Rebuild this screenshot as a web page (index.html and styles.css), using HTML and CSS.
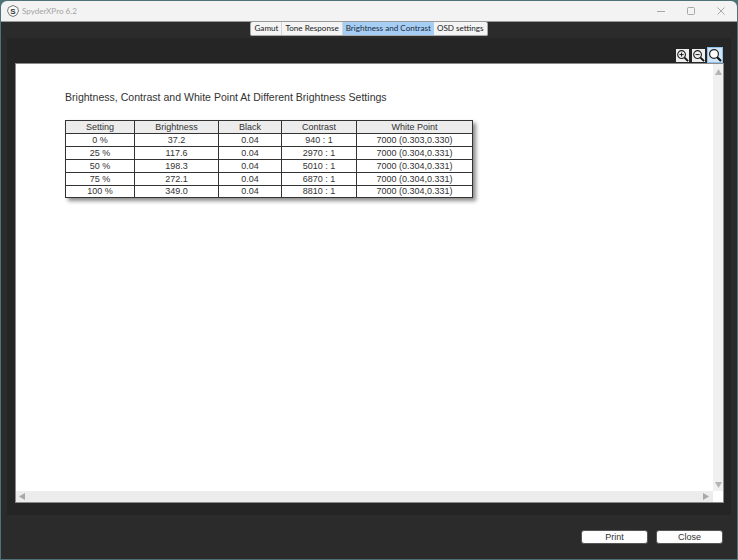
FILE: index.html
```html
<!DOCTYPE html>
<html lang="en">
<head>
<meta charset="utf-8">
<title>SpyderXPro 6.2</title>
<link rel="stylesheet" href="styles.css">
</head>
<body>
<div class="window">
  <header class="titlebar">
    <svg class="logo" width="14" height="14" viewBox="0 0 14 14"><path d="M7 1.5 L11.5 3.5 L12.5 7 L10.5 11 L7 12.5 L3.5 11 L1.5 7 L2.5 3.5 Z" fill="#fbfbfb" stroke="#777" stroke-width="1"/><text x="7" y="10" text-anchor="middle" class="logo-s">S</text></svg>
    <span class="title">SpyderXPro 6.2</span>
    <div class="controls">
      <svg width="8" height="8" viewBox="0 0 8 8"><path d="M0 4.5H8" stroke="#a8a8a8" fill="none"/></svg>
      <svg width="8" height="8" viewBox="0 0 8 8"><rect x="0.5" y="0.5" width="7" height="7" rx="1" stroke="#a8a8a8" fill="none"/></svg>
      <svg width="8" height="8" viewBox="0 0 8 8"><path d="M0.5 0.5L7.5 7.5M7.5 0.5L0.5 7.5" stroke="#a8a8a8" fill="none"/></svg>
    </div>
  </header>
  <main class="body">
    <nav class="tabs">
      <span class="tab">Gamut</span>
      <span class="tab">Tone Response</span>
      <span class="tab active">Brightness and Contrast</span>
      <span class="tab">OSD settings</span>
    </nav>
    <div class="panel">
      <div class="zoombar">
        <button class="zoom" aria-label="Zoom in"><svg width="13" height="13" viewBox="0 0 14 14"><circle cx="6" cy="6" r="4.2" fill="none" stroke="#222" stroke-width="1.2"/><path d="M9.2 9.2L13 13" stroke="#111" stroke-width="2"/><path d="M3.8 6H8.2M6 3.8V8.2" stroke="#111"/></svg></button>
        <button class="zoom" aria-label="Zoom out"><svg width="13" height="13" viewBox="0 0 14 14"><circle cx="6" cy="6" r="4.2" fill="none" stroke="#222" stroke-width="1.2"/><path d="M9.2 9.2L13 13" stroke="#111" stroke-width="2"/><path d="M3.8 6H8.2" stroke="#111"/></svg></button>
        <button class="zoom selected" aria-label="Fit"><svg width="14" height="14" viewBox="0 0 14 14"><circle cx="6" cy="6" r="4.4" fill="#fff" stroke="#222" stroke-width="1.2"/><path d="M9.2 9.2L13 13" stroke="#111" stroke-width="2"/></svg></button>
      </div>
      <section class="viewer">
        <div class="viewer-main">
          <div class="page">
            <h1 class="heading">Brightness, Contrast and White Point At Different Brightness Settings</h1>
            <table class="report">
              <colgroup><col class="c1"><col class="c2"><col class="c3"><col class="c4"><col class="c5"></colgroup>
              <thead><tr><th>Setting</th><th>Brightness</th><th>Black</th><th>Contrast</th><th>White Point</th></tr></thead>
              <tbody>
                <tr><td>0 %</td><td>37.2</td><td>0.04</td><td>940 : 1</td><td>7000 (0.303,0.330)</td></tr>
                <tr><td>25 %</td><td>117.6</td><td>0.04</td><td>2970 : 1</td><td>7000 (0.304,0.331)</td></tr>
                <tr><td>50 %</td><td>198.3</td><td>0.04</td><td>5010 : 1</td><td>7000 (0.304,0.331)</td></tr>
                <tr><td>75 %</td><td>272.1</td><td>0.04</td><td>6870 : 1</td><td>7000 (0.304,0.331)</td></tr>
                <tr><td>100 %</td><td>349.0</td><td>0.04</td><td>8810 : 1</td><td>7000 (0.304,0.331)</td></tr>
              </tbody>
            </table>
          </div>
          <div class="vscroll">
            <svg width="7" height="6" viewBox="0 0 7 6"><path d="M3.5 0L7 6H0Z" fill="#b4b4b4"/></svg>
            <svg width="7" height="6" viewBox="0 0 7 6"><path d="M0 0H7L3.5 6Z" fill="#b4b4b4"/></svg>
          </div>
        </div>
        <div class="viewer-bottom">
          <div class="hscroll">
            <svg width="6" height="7" viewBox="0 0 6 7"><path d="M0 3.5L6 0V7Z" fill="#a8a8a8"/></svg>
            <svg width="6" height="7" viewBox="0 0 6 7"><path d="M6 3.5L0 0V7Z" fill="#a8a8a8"/></svg>
          </div>
          <div class="corner"></div>
        </div>
      </section>
    </div>
    <footer class="actions">
      <button class="action">Print</button>
      <button class="action">Close</button>
    </footer>
  </main>
</div>
</body>
</html>
```
FILE: styles.css
```css
* { box-sizing: border-box; }
html, body { margin: 0; padding: 0; }
body { width: 738px; height: 560px; overflow: hidden; background: #3a6f78; font-family: "Liberation Sans", Arial, sans-serif; }
.window { width: 738px; height: 560px; display: flex; flex-direction: column; padding: 1px; background: #4f7276; }
.titlebar { height: 21px; flex: none; display: flex; align-items: center; padding-left: 5px; background: #f3f3f3; border-radius: 6px 6px 0 0; border-bottom: 1px solid #9a9a9a; }
.logo { flex: none; }
.logo-s { font: bold 8px "Liberation Sans", sans-serif; fill: #333; }
.title { margin-left: 2px; font: 8.1px "Lato", sans-serif; color: #a4a4a4; }
.controls { margin-left: auto; display: flex; gap: 22px; padding-right: 12px; align-items: center; }
.body { flex: 1; min-height: 0; display: flex; flex-direction: column; background: #2b2b2b; }
.tabs { align-self: center; flex: none; display: flex; height: 14px; background: #f4f4f4; border-radius: 2px; font: 8.1px/13px "Lato", sans-serif; color: #222; border: 1px solid #aaa; border-top: none; overflow: hidden; }
.tab { padding: 0 3px; border-right: 1px solid #d4d4d4; white-space: nowrap; }
.tab:last-child { border-right: none; }
.active { background: #a6cef5; color: #1c2a3a; border-right: none; }
.panel { flex: none; margin: 2px 6px 0; padding: 9px 8px 13px 9px; background: #252525; }
.zoombar { display: flex; justify-content: flex-end; align-items: center; gap: 2px; height: 16px; }
.zoom { width: 14px; height: 16px; padding: 0; display: flex; align-items: center; justify-content: center; border: none; background: transparent; }
.zoom svg { background: #eee; }
.selected { width: 16px; background: #cfe4f7; border: 1px solid #8fc0ea; }
.selected svg { background: #cfe4f7; }
.viewer { width: 707px; height: 438px; margin-top: 1px; display: flex; flex-direction: column; background: #fff; box-shadow: 0 0 0 1px #8a8a8a; }
.viewer-main { flex: 1; min-height: 0; display: flex; }
.page { flex: 1; padding: 26px 0 0 49px; }
.heading { margin: 0 0 16px; font: 400 10.56px/14px "Liberation Sans", sans-serif; color: #333; white-space: nowrap; }
.report { border-collapse: collapse; table-layout: fixed; width: 407px; font-size: 9px; color: #333; box-shadow: 3px 3px 4px rgba(0, 0, 0, .45); }
.c1 { width: 69px; } .c2 { width: 84px; } .c3 { width: 63px; } .c4 { width: 75px; } .c5 { width: 116px; }
.report th, .report td { height: 13px; padding: 0; border: 1px solid #333; text-align: center; line-height: 11px; }
.report tr:last-child td { height: 12px; }
.report th { font-weight: 400; background: #ececec; }
.vscroll { width: 10px; background: #f0f0f0; display: flex; flex-direction: column; justify-content: space-between; align-items: center; padding: 5px 0 3px; }
.viewer-bottom { height: 11px; flex: none; display: flex; }
.hscroll { flex: 1; background: #ececec; display: flex; justify-content: space-between; align-items: center; padding: 0 4px 0 3px; }
.corner { width: 10px; background: #fff; }
.actions { margin-top: auto; display: flex; justify-content: flex-end; gap: 8px; padding: 0 14px 15px 0; }
.action { width: 67px; height: 14px; padding: 0; border: 1px solid #555; border-radius: 3px; background: #fdfdfd; font: 9px/12px "Liberation Sans", sans-serif; color: #333; }
```
